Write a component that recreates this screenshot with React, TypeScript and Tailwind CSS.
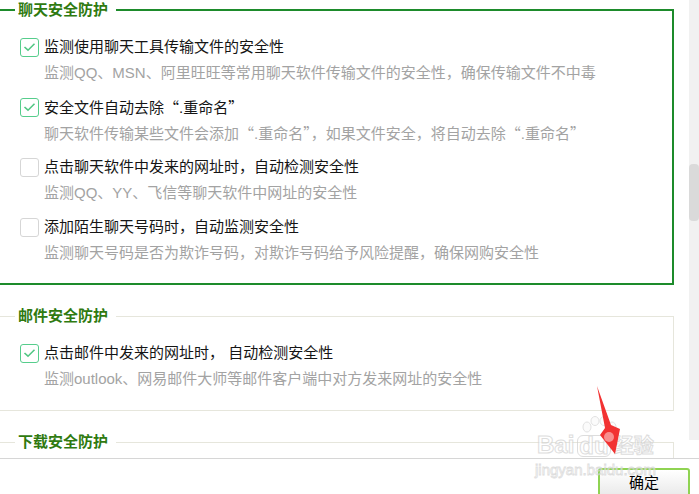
import React from "react";

type Item = { label: string; desc: string; checked: boolean };

const chatItems: Item[] = [
  {
    label: "监测使用聊天工具传输文件的安全性",
    desc: "监测QQ、MSN、阿里旺旺等常用聊天软件传输文件的安全性，确保传输文件不中毒",
    checked: true,
  },
  {
    label: "安全文件自动去除“.重命名”",
    desc: "聊天软件传输某些文件会添加“.重命名”，如果文件安全，将自动去除“.重命名”",
    checked: true,
  },
  {
    label: "点击聊天软件中发来的网址时，自动检测安全性",
    desc: "监测QQ、YY、飞信等聊天软件中网址的安全性",
    checked: false,
  },
  {
    label: "添加陌生聊天号码时，自动监测安全性",
    desc: "监测聊天号码是否为欺诈号码，对欺诈号码给予风险提醒，确保网购安全性",
    checked: false,
  },
];

const mailItems: Item[] = [
  {
    label: "点击邮件中发来的网址时， 自动检测安全性",
    desc: "监测outlook、网易邮件大师等邮件客户端中对方发来网址的安全性",
    checked: true,
  },
];

// curly quotes need the CJK face so they come out full width
function Text({ value }: { value: string }) {
  const parts = value.split(/([“”])/);
  return (
    <>
      {parts.map((p, i) =>
        p === "“" || p === "”" ? (
          <span key={i} className="font-['Noto_Sans_CJK_SC',sans-serif]">
            {p}
          </span>
        ) : (
          <React.Fragment key={i}>{p}</React.Fragment>
        )
      )}
    </>
  );
}

function Checkbox({ checked }: { checked: boolean }) {
  if (!checked) {
    return <div className="w-[19px] h-[19px] shrink-0 rounded-[3px] border border-[#d6d6d6] bg-white" />;
  }
  return (
    <div className="w-[19px] h-[19px] shrink-0 rounded-[3px] border-[1.5px] border-[#56cd8c] bg-white flex items-center justify-center">
      <svg width="13" height="10" viewBox="0 0 13 10">
        <path d="M1.5 5 L5 8.2 L11.5 1.8" fill="none" stroke="#52c784" strokeWidth="1.6" />
      </svg>
    </div>
  );
}

function Row({ item }: { item: Item }) {
  return (
    <div className="flex flex-col h-[48px]">
      <div className="flex items-center h-[22px] gap-[5px]">
        <Checkbox checked={item.checked} />
        <span className="text-[15px] leading-[22px] text-[#151515] whitespace-nowrap">
          <Text value={item.label} />
        </span>
      </div>
      <div className="mt-[4px] pl-[24px] text-[15px] leading-[22px] text-[#a3a3a3] whitespace-nowrap">
        <Text value={item.desc} />
      </div>
    </div>
  );
}

function Section({
  title,
  items,
  active,
  className = "",
}: {
  title: string;
  items: Item[];
  active?: boolean;
  className?: string;
}) {
  return (
    <fieldset
      className={`ml-[-12px] mr-[15px] ${
        active ? "border-2 border-[#1d8b2b]" : "border border-[#e6e6dc]"
      } ${className}`}
    >
      <legend
        className={`${active ? "ml-[25px]" : "ml-[26px]"} pl-[3px] pr-[8px] h-[20px] text-[15px] leading-[20px] font-bold text-[#2f7a10]`}
      >
        {title}
      </legend>
      <div className={`${active ? "pl-[30px] pb-[19px]" : "pl-[31px] pb-[20px]"} pt-[16px] flex flex-col gap-[12px]`}>
        {items.map((it, i) => (
          <Row key={i} item={it} />
        ))}
      </div>
    </fieldset>
  );
}

function Watermark() {
  return (
    <div className="absolute left-[535px] top-[414px] w-[130px] h-[66px] pointer-events-none opacity-70 whitespace-nowrap">
      <svg className="absolute left-[44px] top-[2px]" width="40" height="24" viewBox="0 0 40 24">
        <g fill="#fafafa" stroke="#d6d6d6" strokeWidth="1">
          <ellipse cx="8" cy="11" rx="4" ry="5" />
          <ellipse cx="16" cy="5" rx="4" ry="4.5" />
          <ellipse cx="25" cy="5" rx="4" ry="4.5" />
          <ellipse cx="33" cy="11" rx="4" ry="5" />
        </g>
      </svg>
      <div className="absolute left-[2px] top-[19px] flex items-end text-[24px] leading-[24px] font-bold text-white [-webkit-text-stroke:1px_#d0d0d0] font-['Liberation_Sans','Noto_Sans_CJK_SC',sans-serif]">
        <span>Bai</span>
        <span className="ml-[3px] px-[1px] rounded-[6px] border-[1.5px] border-[#d0d0d0] leading-[20px]">du</span>
        <span className="ml-[3px] text-[20px] leading-[22px]">经验</span>
      </div>
      <div className="absolute left-[0px] top-[47px] text-[15px] leading-[18px] text-white [-webkit-text-stroke:0.8px_#d0d0d0] font-['Liberation_Sans',sans-serif]">
        jingyan.baidu.com
      </div>
    </div>
  );
}

function Arrow() {
  return (
    <svg className="absolute left-0 top-0 pointer-events-none" width="699" height="494" viewBox="0 0 699 494">
      <polygon points="597,386 611,425 620,429 615,454 600,435 605,428" fill="#f23232" />
      <circle cx="609" cy="437" r="5" fill="#ffffff" opacity="0.45" />
    </svg>
  );
}

export default function App() {
  return (
    <div className="relative w-[699px] h-[494px] overflow-hidden bg-white font-['Liberation_Sans','Noto_Sans_CJK_SC',sans-serif]">
      <div className="flex h-[458px]">
        <div className="flex-1 overflow-hidden">
          <Section title="聊天安全防护" items={chatItems} active />
          <Section title="邮件安全防护" items={mailItems} className="mt-[21px]" />
          <Section title="下载安全防护" items={[]} className="mt-[21px]" />
        </div>
        <div className="w-[10px] shrink-0">
          <div className="h-[440px] bg-[#f1f1f1] pt-[164px]">
            <div className="h-[57px] rounded-[4px] bg-[#dadada]" />
          </div>
        </div>
      </div>
      <div className="h-[36px] border-t border-[#d6d6d6] flex justify-end items-start pt-[9px] pr-[9px]">
        <button className="w-[92px] h-[30px] rounded-[3px] border-2 border-[#8fd352] bg-gradient-to-b from-[#ffffff] to-[#e9e9e9] text-[15px] leading-[26px] text-black">
          确定
        </button>
      </div>
      <Watermark />
      <Arrow />
    </div>
  );
}
